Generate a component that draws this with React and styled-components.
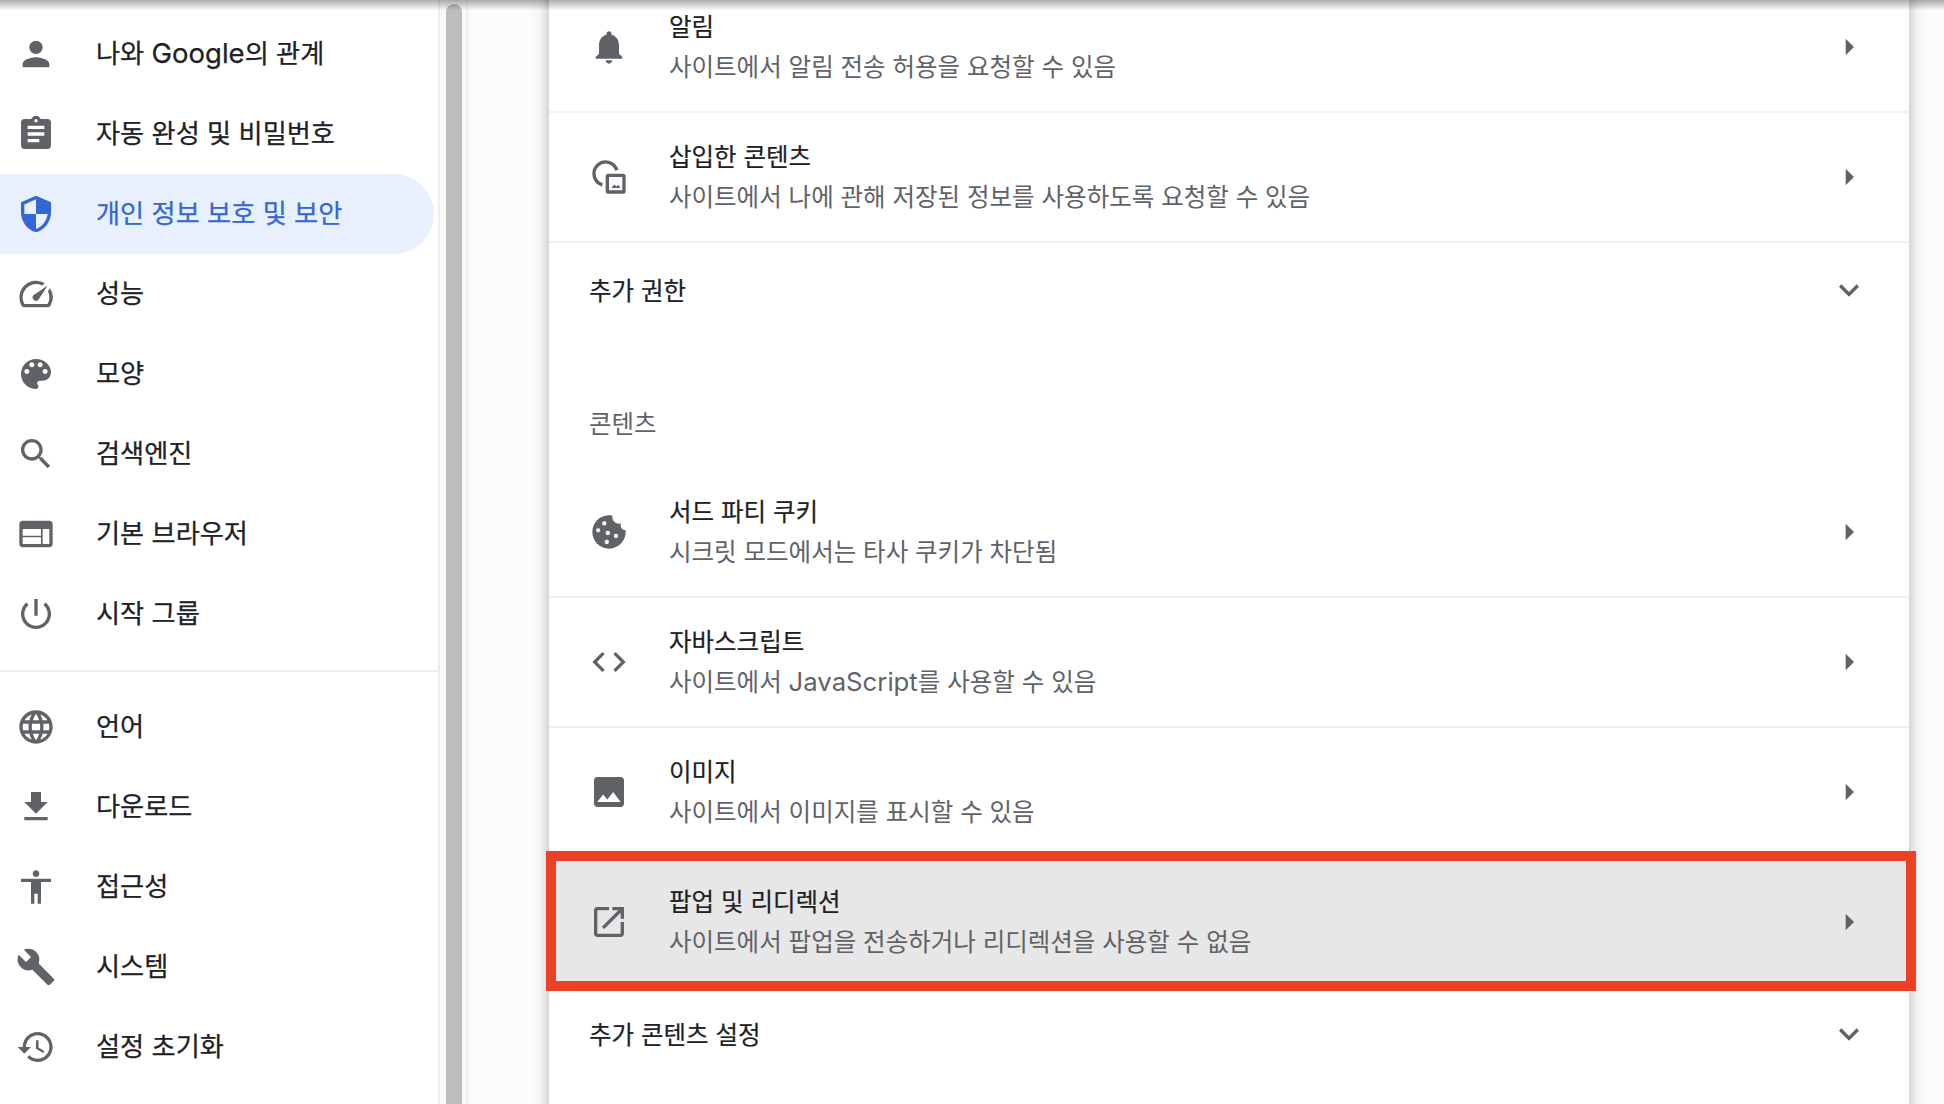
import React from 'react';
import styled, { createGlobalStyle } from 'styled-components';

const paths = {
    person: 'M12 12c2.21 0 4-1.79 4-4s-1.79-4-4-4-4 1.79-4 4 1.79 4 4 4zm0 2c-2.67 0-8 1.34-8 4v2h16v-2c0-2.66-5.33-4-8-4z',
    assignment: 'M19 3h-4.18C14.4 1.84 13.3 1 12 1c-1.3 0-2.4.84-2.82 2H5c-1.1 0-2 .9-2 2v14c0 1.1.9 2 2 2h14c1.1 0 2-.9 2-2V5c0-1.1-.9-2-2-2zm-7 0c.55 0 1 .45 1 1s-.45 1-1 1-1-.45-1-1 .45-1 1-1zm2 14H7v-2h7v2zm3-4H7v-2h10v2zm0-4H7V7h10v2z',
    security: 'M12 1L3 5v6c0 5.55 3.84 10.74 9 12 5.16-1.26 9-6.45 9-12V5l-9-4zm0 10.99h7c-.53 4.12-3.28 7.79-7 8.94V12H5V6.3l7-3.11v8.8z',
    speed: 'M20.38 8.57l-1.23 1.85a8 8 0 0 1-.22 7.58H5.07A8 8 0 0 1 15.58 6.85l1.85-1.23A10 10 0 0 0 3.35 19a2 2 0 0 0 1.72 1h13.85a2 2 0 0 0 1.74-1 10 10 0 0 0-.27-10.44zm-9.79 6.84a2 2 0 0 0 2.83 0l5.66-8.49-8.49 5.66a2 2 0 0 0 0 2.83z',
    palette: 'M12 3c-4.97 0-9 4.03-9 9s4.03 9 9 9c.83 0 1.5-.67 1.5-1.5 0-.39-.15-.74-.39-1.01-.23-.26-.38-.61-.38-.99 0-.83.67-1.5 1.5-1.5H16c2.76 0 5-2.24 5-5 0-4.42-4.03-8-9-8zm-5.5 9c-.83 0-1.5-.67-1.5-1.5S5.67 9 6.5 9 8 9.67 8 10.5 7.33 12 6.5 12zm3-4C8.67 8 8 7.33 8 6.5S8.67 5 9.5 5s1.5.67 1.5 1.5S10.33 8 9.5 8zm5 0c-.83 0-1.5-.67-1.5-1.5S13.67 5 14.5 5s1.5.67 1.5 1.5S15.33 8 14.5 8zm3 4c-.83 0-1.5-.67-1.5-1.5S16.67 9 17.5 9s1.5.67 1.5 1.5-.67 1.5-1.5 1.5z',
    search: 'M15.5 14h-.79l-.28-.27C15.41 12.59 16 11.11 16 9.5 16 5.91 13.09 3 9.5 3S3 5.91 3 9.5 5.91 16 9.5 16c1.61 0 3.09-.59 4.23-1.57l.27.28v.79l5 4.99L20.49 19l-4.99-5zm-6 0C7.01 14 5 11.99 5 9.5S7.01 5 9.5 5 14 7.01 14 9.5 11.99 14 9.5 14z',
    web: 'M20 4H4c-1.1 0-1.99.9-1.99 2L2 18c0 1.1.9 2 2 2h16c1.1 0 2-.9 2-2V6c0-1.1-.9-2-2-2zm-5 14H4v-4h11v4zm0-5H4V9h11v4zm5 5h-4V9h4v9z',
    power: 'M13 3h-2v10h2V3zm4.83 2.17l-1.42 1.42C17.99 7.86 19 9.81 19 12c0 3.87-3.13 7-7 7s-7-3.13-7-7c0-2.19 1.01-4.14 2.58-5.42L6.17 5.17C4.23 6.82 3 9.26 3 12c0 4.97 4.03 9 9 9s9-4.03 9-9c0-2.74-1.23-5.18-3.17-6.83z',
    language: 'M11.99 2C6.47 2 2 6.48 2 12s4.47 10 9.99 10C17.52 22 22 17.52 22 12S17.52 2 11.99 2zm6.93 6h-2.95c-.32-1.25-.78-2.45-1.38-3.56 1.84.63 3.37 1.91 4.33 3.56zM12 4.04c.83 1.2 1.48 2.53 1.91 3.96h-3.82c.43-1.43 1.08-2.76 1.91-3.96zM4.26 14C4.1 13.36 4 12.69 4 12s.1-1.36.26-2h3.38c-.08.66-.14 1.32-.14 2 0 .68.06 1.34.14 2H4.26zm.82 2h2.95c.32 1.25.78 2.45 1.38 3.56-1.84-.63-3.37-1.9-4.33-3.56zm2.95-8H5.08c.96-1.66 2.49-2.93 4.33-3.56C8.81 5.55 8.35 6.75 8.03 8zM12 19.96c-.83-1.2-1.48-2.53-1.91-3.96h3.82c-.43 1.43-1.08 2.76-1.91 3.96zM14.34 14H9.66c-.09-.66-.16-1.32-.16-2 0-.68.07-1.35.16-2h4.68c.09.65.16 1.32.16 2 0 .68-.07 1.34-.16 2zm.25 5.56c.6-1.11 1.06-2.31 1.38-3.56h2.95c-.96 1.65-2.49 2.93-4.33 3.56zM16.36 14c.08-.66.14-1.32.14-2 0-.68-.06-1.34-.14-2h3.38c.16.64.26 1.31.26 2s-.1 1.36-.26 2h-3.38z',
    download: 'M19 9h-4V3H9v6H5l7 7 7-7zM5 18v2h14v-2H5z',
    accessibility: 'M12 2c1.1 0 2 .9 2 2s-.9 2-2 2-2-.9-2-2 .9-2 2-2zm9 7h-6v13h-2v-6h-2v6H9V9H3V7h18v2z',
    build: 'M22.7 19l-9.1-9.1c.9-2.3.4-5-1.5-6.9-2-2-5-2.4-7.4-1.3L9 6 6 9 1.6 4.7C.4 7.1.9 10.1 2.9 12.1c1.9 1.9 4.6 2.4 6.9 1.5l9.1 9.1c.4.4 1 .4 1.4 0l2.3-2.3c.5-.4.5-1.1.1-1.4z',
    restore: 'M13 3c-4.97 0-9 4.03-9 9H1l3.89 3.89.07.14L9 12H6c0-3.87 3.13-7 7-7s7 3.13 7 7-3.13 7-7 7c-1.93 0-3.68-.79-4.94-2.06l-1.42 1.42C8.27 19.99 10.51 21 13 21c4.97 0 9-4.03 9-9s-4.03-9-9-9zm-1 5v5l4.28 2.54.72-1.21-3.5-2.08V8H12z',
    bell: 'M12 22c1.1 0 2-.9 2-2h-4c0 1.1.89 2 2 2zm6-6v-5c0-3.07-1.64-5.64-4.5-6.32V4c0-.83-.67-1.5-1.5-1.5s-1.5.67-1.5 1.5v.68C7.63 5.36 6 7.92 6 11v5l-2 2v1h16v-1l-2-2z',
    cookie: 'M21.95 10.99c-1.79-.03-3.7-1.95-2.68-4.22-2.97 1-5.78-1.59-5.19-4.56C7.11.74 2 6.41 2 12c0 5.52 4.48 10 10 10 5.89 0 10.54-5.08 9.95-11.01zM9.2 5.5a1.3 1.3 0 1 0 0 2.6 1.3 1.3 0 0 0 0-2.6zM5.5 9.7a1.3 1.3 0 1 0 0 2.6 1.3 1.3 0 0 0 0-2.6zm5.8 1.6a1.3 1.3 0 1 0 0 2.6 1.3 1.3 0 0 0 0-2.6zm4.9 1.8a1.3 1.3 0 1 0 0 2.6 1.3 1.3 0 0 0 0-2.6zm-5.5 3.6a1.3 1.3 0 1 0 0 2.6 1.3 1.3 0 0 0 0-2.6z',
    code: 'M9.4 16.6L4.8 12l4.6-4.6L8 6l-6 6 6 6 1.4-1.4zm5.2 0l4.6-4.6-4.6-4.6L16 6l6 6-6 6-1.4-1.4z',
    image: 'M21 19V5c0-1.1-.9-2-2-2H5c-1.1 0-2 .9-2 2v14c0 1.1.9 2 2 2h14c1.1 0 2-.9 2-2zM8.5 13.5l2.5 3.01L14.5 12l4.5 6H5l3.5-4.5z',
    popup: 'M19 19H5V5h7V3H5c-1.11 0-2 .9-2 2v14c0 1.1.89 2 2 2h14c1.1 0 2-.9 2-2v-7h-2v7zM14 3v2h3.59l-9.83 9.83 1.41 1.41L19 6.41V10h2V3h-7z',
    arrow: 'M10 7l5 5-5 5z',
    expand: 'M16.59 8.59L12 13.17 7.41 8.59 6 10l6 6 6-6z',
};

const Icon = ({ name }) => (
    <IconSvg viewBox="0 0 24 24">
        {name === 'embedded' ? (
            <>
                <path d="M8 16.7A7 7 0 1 1 16.7 8" fill="none" stroke="currentColor" strokeWidth="2" />
                <path fillRule="evenodd" d="M11.5 10h9A1.5 1.5 0 0 1 22 11.5v9a1.5 1.5 0 0 1-1.5 1.5h-9a1.5 1.5 0 0 1-1.5-1.5v-9A1.5 1.5 0 0 1 11.5 10zM12 12v8h8v-8zM13.5 18.6l1.7-2.2 1.2 1.4 1-1.1 1.6 1.9z" />
            </>
        ) : (
            <path fillRule="evenodd" d={paths[name]} />
        )}
    </IconSvg>
);

const NavList = ({ items }) => items.map((e) => (
    <NavItem key={e.id} $active={e.active}>
        <Icon name={e.icon} />
        <NavLabel>{e.label}</NavLabel>
    </NavItem>
));

const SiteRow = ({ icon, title, sub, first, highlight }) => (
    <Row $first={first} $highlight={highlight}>
        <Icon name={icon} />
        <RowText>
            <RowTitle>{title}</RowTitle>
            <RowSub>{sub}</RowSub>
        </RowText>
        <Icon name="arrow" />
    </Row>
);

const App = () => {
    const firstGroup = [
        { icon: 'person', label: <>나와 <Latin>Google</Latin>의 관계</>, id: 'me' },
        { icon: 'assignment', label: '자동 완성 및 비밀번호', id: 'autofill' },
        { icon: 'security', label: '개인 정보 보호 및 보안', id: 'privacy', active: true },
        { icon: 'speed', label: '성능', id: 'speed' },
        { icon: 'palette', label: '모양', id: 'look' },
        { icon: 'search', label: '검색엔진', id: 'search' },
        { icon: 'web', label: '기본 브라우저', id: 'browser' },
        { icon: 'power', label: '시작 그룹', id: 'start' },
    ];

    const secondGroup = [
        { icon: 'language', label: '언어', id: 'lang' },
        { icon: 'download', label: '다운로드', id: 'down' },
        { icon: 'accessibility', label: '접근성', id: 'a11y' },
        { icon: 'build', label: '시스템', id: 'system' },
        { icon: 'restore', label: '설정 초기화', id: 'reset' },
    ];

    return <Page>
        <GlobalStyle />
        <TopShadow />
        <Sidebar>
            <NavList items={firstGroup} />
            <NavDivider />
            <NavList items={secondGroup} />
        </Sidebar>
        <ScrollTrack>
            <ScrollThumb />
        </ScrollTrack>
        <Main>
            <Card>
                <SiteRow first icon="bell" title="알림" sub="사이트에서 알림 전송 허용을 요청할 수 있음" />
                <SiteRow icon="embedded" title="삽입한 콘텐츠" sub="사이트에서 나에 관해 저장된 정보를 사용하도록 요청할 수 있음" />
                <ExpandRow>
                    <ExpandLabel>추가 권한</ExpandLabel>
                    <Icon name="expand" />
                </ExpandRow>
                <SectionHeading>콘텐츠</SectionHeading>
                <SiteRow first icon="cookie" title="서드 파티 쿠키" sub="시크릿 모드에서는 타사 쿠키가 차단됨" />
                <SiteRow icon="code" title="자바스크립트" sub={<>사이트에서 <Latin>JavaScript</Latin>를 사용할 수 있음</>} />
                <SiteRow icon="image" title="이미지" sub="사이트에서 이미지를 표시할 수 있음" />
                <SiteRow highlight icon="popup" title="팝업 및 리디렉션" sub="사이트에서 팝업을 전송하거나 리디렉션을 사용할 수 없음" />
                <ExpandRow $plain>
                    <ExpandLabel>추가 콘텐츠 설정</ExpandLabel>
                    <Icon name="expand" />
                </ExpandRow>
            </Card>
        </Main>
    </Page>;
};

const GlobalStyle = createGlobalStyle`
body {
    margin: 0;
    background: #fff;
    overflow: hidden;
    font-family: Inter, "Noto Sans CJK KR", sans-serif;
}
`
const Latin = styled.span`
font-size: 1.05em;
`
const Page = styled.div`
position: relative;
display: flex;
height: 1104px;
overflow: hidden;
`
const TopShadow = styled.div`
position: absolute;
top: 0;
left: 0;
right: 0;
height: 10px;
z-index: 5;
background: linear-gradient(rgba(0, 0, 0, 0.32), rgba(0, 0, 0, 0.02));
`
const IconSvg = styled.svg`
width: 40px;
height: 40px;
flex: none;
fill: currentColor;
color: #5f6368;
`
const Sidebar = styled.nav`
width: 438px;
flex: none;
padding-top: 14px;
border-right: 2px solid #eeeeee;
`
const NavItem = styled.div`
display: flex;
align-items: center;
gap: 40px;
width: 434px;
height: 80px;
box-sizing: border-box;
padding-left: 16px;
border-radius: 0 40px 40px 0;
font-size: 26.2px;
color: ${(props) => (props.$active ? '#3367d6' : '#202124')};
background: ${(props) => (props.$active ? '#e8f0fe' : 'transparent')};
-webkit-text-stroke: 0.25px currentColor;

${IconSvg} {
    color: ${(props) => (props.$active ? '#3367d6' : '#5f6368')};
}
`
const NavLabel = styled.span`
padding-bottom: 5px;
`
const NavDivider = styled.div`
height: 2px;
margin: 16px 0 15px;
background: #eeeeee;
`
const ScrollTrack = styled.div`
width: 28px;
flex: none;
box-sizing: border-box;
padding: 4px 4px 0 6px;
background: #fafafa;
border-right: 2px solid #eeeeee;
`
const ScrollThumb = styled.div`
width: 16px;
height: 1200px;
border-radius: 8px;
background: #bebebe;
`
const Main = styled.main`
flex: 1;
padding-left: 81px;
background: #fbfbfb;
`
const Card = styled.section`
width: 1360px;
margin-top: -19px;
height: 1200px;
background: #fff;
box-shadow: 0 0 14px rgba(60, 64, 67, 0.4);
`
const Row = styled.div`
position: relative;
display: flex;
align-items: center;
gap: 40px;
height: 130px;
box-sizing: border-box;
padding: 0 40px;
border-top: 2px solid ${(props) => (props.$first || props.$highlight ? 'transparent' : '#f0f0f0')};
background: ${(props) => (props.$highlight ? '#e7e7e7' : 'transparent')};

${(props) => props.$highlight && `
    &::after {
        content: '';
        position: absolute;
        top: -7px;
        bottom: -5px;
        left: -3px;
        right: -7px;
        border: 10px solid #ec4126;
    }
`}
`
const RowText = styled.div`
flex: 1;
font-size: 24.5px;
line-height: 40px;
`
const RowTitle = styled.div`
color: #202124;
-webkit-text-stroke: 0.2px currentColor;
`
const RowSub = styled.div`
color: #5f6368;
`
const ExpandRow = styled.div`
display: flex;
align-items: center;
justify-content: space-between;
height: 96px;
box-sizing: border-box;
padding: 0 40px;
font-size: 24.5px;
color: #202124;
border-top: ${(props) => (props.$plain ? 'none' : '2px solid #f0f0f0')};
`
const ExpandLabel = styled.span`
padding-bottom: 2px;
-webkit-text-stroke: 0.2px currentColor;
`
const SectionHeading = styled.h2`
display: flex;
align-items: flex-end;
height: 129px;
box-sizing: border-box;
margin: 0;
padding: 0 40px 26px;
font-size: 24.5px;
font-weight: 400;
color: #5f6368;
`

export default App;
